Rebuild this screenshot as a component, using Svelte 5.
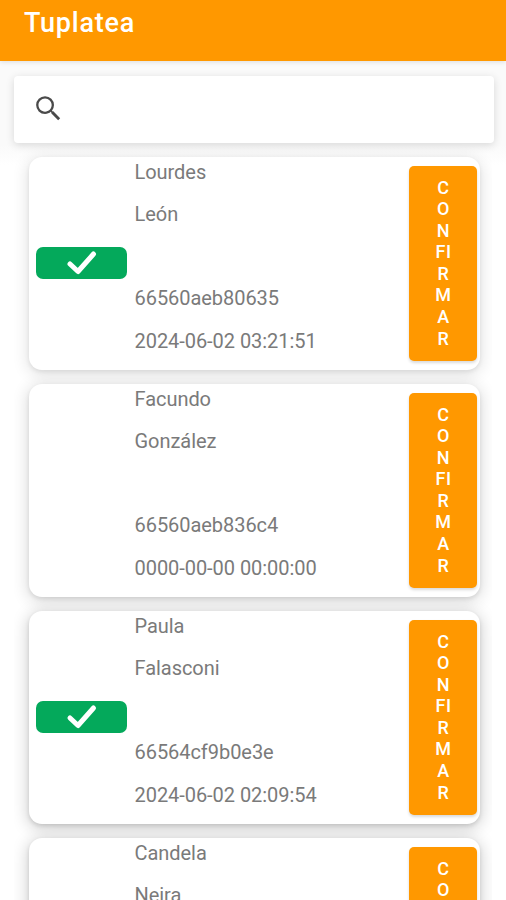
<script lang="ts">
  type Guest = {
    name: string;
    surname: string;
    code: string;
    checkedAt: string;
    confirmed: boolean;
    shade: number;
  };

  let search = $state('');

  const guests: Guest[] = [
    { name: 'Lourdes', surname: 'León', code: '66560aeb80635', checkedAt: '2024-06-02 03:21:51', confirmed: true, shade: 0.17 },
    { name: 'Facundo', surname: 'González', code: '66560aeb836c4', checkedAt: '0000-00-00 00:00:00', confirmed: false, shade: 0.21 },
    { name: 'Paula', surname: 'Falasconi', code: '66564cf9b0e3e', checkedAt: '2024-06-02 02:09:54', confirmed: true, shade: 0.27 },
    { name: 'Candela', surname: 'Neira', code: '', checkedAt: '', confirmed: false, shade: 0.27 }
  ];

  const confirmLines = ['C', 'O', 'N', 'FI', 'R', 'M', 'A', 'R'];
</script>

<div class="screen">
  <header>
    <h1>Tuplatea</h1>
  </header>

  <label class="search">
    <svg viewBox="0 0 24 24" aria-hidden="true">
      <path d="M15.5 14h-.79l-.28-.27A6.47 6.47 0 0 0 16 9.5 6.5 6.5 0 1 0 9.5 16c1.61 0 3.09-.59 4.23-1.57l.27.28v.79l5 4.99L20.49 19l-4.99-5zm-6 0.3C6.85 14.3 4.7 12.15 4.7 9.5S6.85 4.700 9.5 4.700 14.3 6.85 14.3 9.5 12.15 14.300 9.5 14.3z" />
    </svg>
    <input bind:value={search} />
  </label>

  <main>
    {#each guests as guest (guest.name)}
      <article class="card" style="--shade: {guest.shade}">
        <div class="status">
          {#if guest.confirmed}
            <span class="badge">
              <svg viewBox="0 0 32 26" aria-hidden="true">
                <path d="M4 14 L12 21.5 L27.500 4" />
              </svg>
            </span>
          {/if}
        </div>

        <div class="info">
          <p>{guest.name}</p>
          <p>{guest.surname}</p>
          <p></p>
          <p>{guest.code}</p>
          <p>{guest.checkedAt}</p>
        </div>

        <button>
          {#each confirmLines as line}
            <span>{line}</span>
          {/each}
        </button>
      </article>
    {/each}
  </main>
</div>

<style>
  :global(body) {
    margin: 0;
    background: #fff;
  }

  .screen {
    display: flex;
    flex-direction: column;
    height: 900px;
    overflow: hidden;
    background: linear-gradient(#fafafa 0, #fafafa 145px, #fff 165px);
    font-family: Roboto, sans-serif;
  }

  header {
    flex: none;
    height: 61px;
    background: #ff9800;
    box-shadow: 0 1px 5px rgba(0, 0, 0, 0.12);
  }

  h1 {
    margin: 0;
    padding: 7px 24px 0;
    color: #fff;
    font-size: 27px;
    font-weight: 500;
    line-height: 33px;
    letter-spacing: 0.75px;
  }

  .search {
    position: relative;
    z-index: 1;
    flex: none;
    display: flex;
    align-items: center;
    height: 67px;
    margin: 15px 12px 0 14px;
    padding: 0 0 2px 18px;
    box-sizing: border-box;
    border-radius: 4px;
    background: #fff;
    box-shadow: 0 2px 8px rgba(0, 0, 0, 0.14);
  }

  .search svg {
    width: 33px;
    height: 33px;
    fill: #4a4a4a;
  }

  input {
    flex: 1;
    border: 0;
    outline: 0;
    background: none;
    font: inherit;
    font-size: 20px;
  }

  main {
    flex: 1;
    display: flex;
    flex-direction: column;
    gap: 14px;
    margin: 0 14px;
    padding: 14px 12.5px 0 14.5px;
    overflow: hidden;
  }

  .card {
    flex: none;
    display: flex;
    box-sizing: border-box;
    height: 213px;
    padding: 8px 2.5px 8px 7.5px;
    border-radius: 13px;
    background: #fff;
    box-shadow:
      0 2px 4px rgba(0, 0, 0, calc(var(--shade) * 0.45)),
      0 3px 16px 2px rgba(0, 0, 0, calc(var(--shade) * 0.65));
  }

  .status {
    display: flex;
    align-items: center;
    width: 98.5px;
  }

  .badge {
    display: flex;
    justify-content: center;
    align-items: center;
    width: 91px;
    height: 32px;
    margin-bottom: 2px;
    border-radius: 7px;
    background: #04a95b;
  }

  .badge svg {
    width: 32px;
    height: 26px;
    fill: none;
    stroke: #fff;
    stroke-width: 5;
    stroke-linecap: round;
    stroke-linejoin: round;
  }

  .info {
    flex: 1;
    margin-top: -5.5px;
  }

  p {
    height: 42.3px;
    margin: 0;
    color: #7a7a7a;
    font-size: 20px;
    line-height: 24px;
    letter-spacing: -0.05px;
    white-space: nowrap;
  }

  button {
    display: flex;
    flex-direction: column;
    align-items: center;
    box-sizing: border-box;
    width: 68px;
    height: 195px;
    margin-top: 0.5px;
    padding: 11px 0 0 1px;
    border: 0;
    border-radius: 5px;
    background: #ff9800;
    box-shadow: 0 2px 3px rgba(0, 0, 0, 0.15);
    color: #fff;
    font-family: inherit;
    font-size: 18px;
    font-weight: 500;
    line-height: 21.6px;
    letter-spacing: 0.6px;
  }

  button span {
    height: 21.6px;
  }
</style>
